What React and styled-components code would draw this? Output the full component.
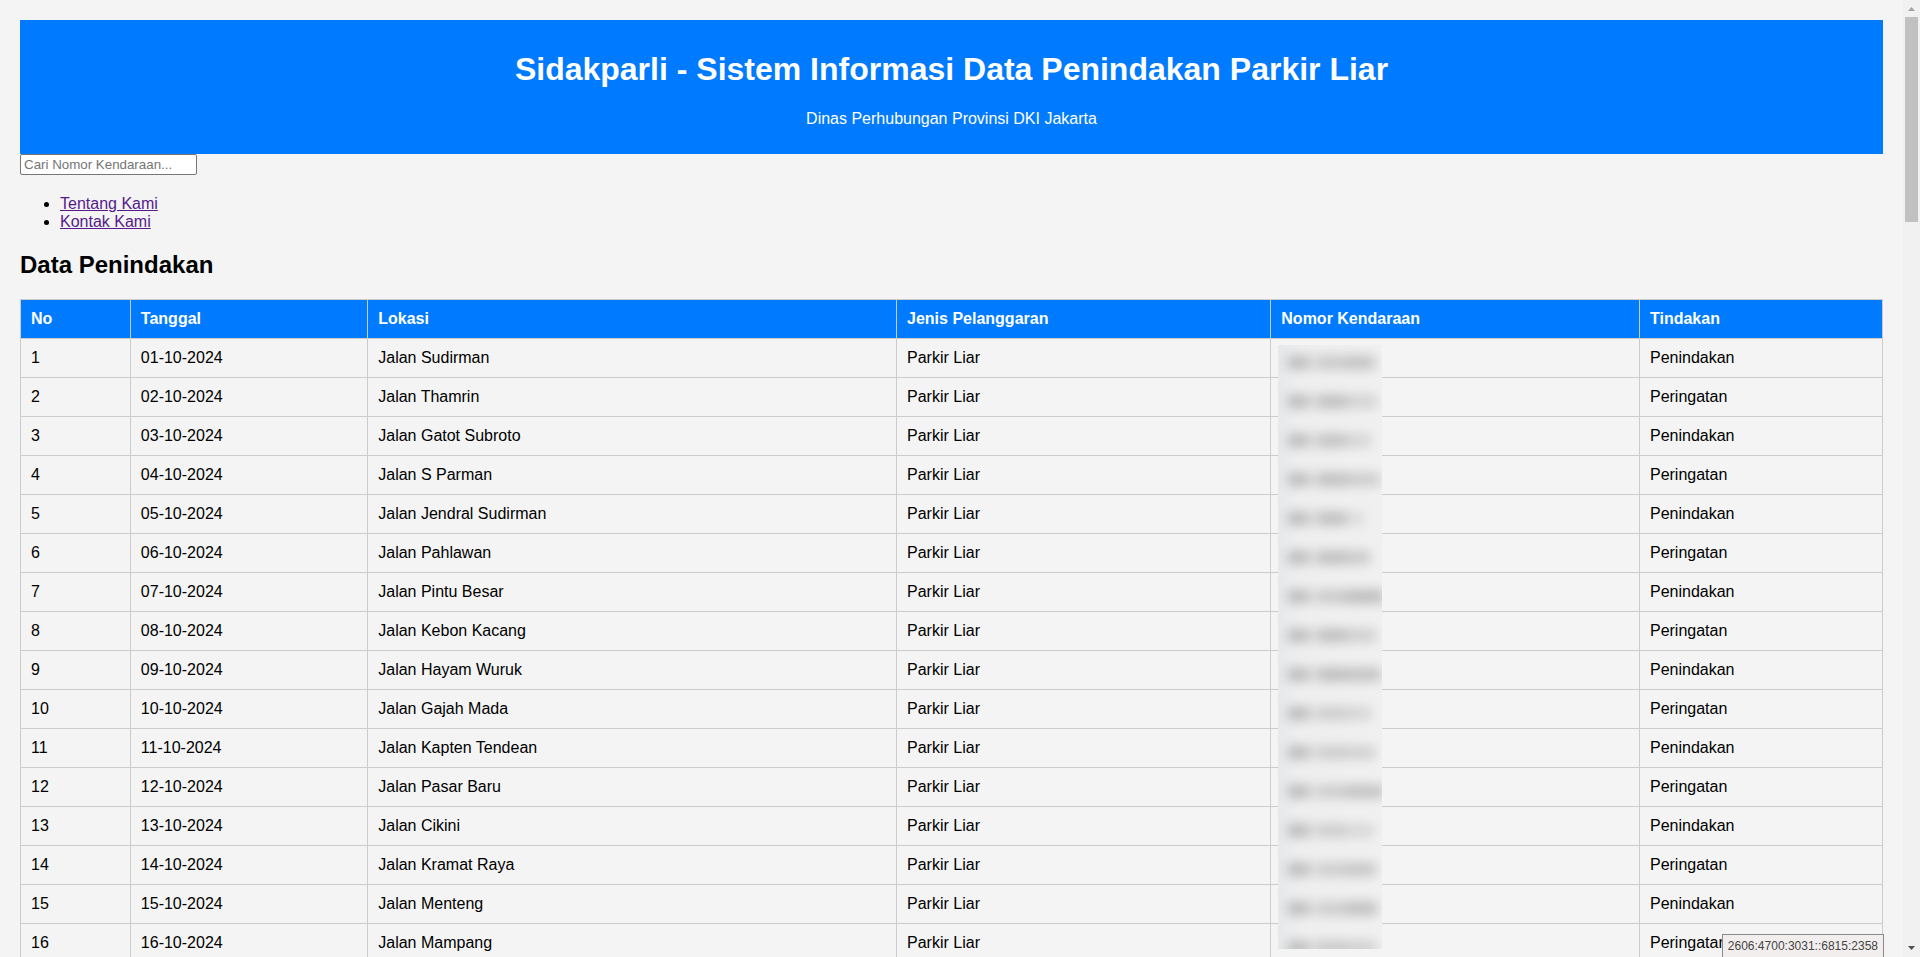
import React, { useState } from "react";
import styled, { createGlobalStyle } from "styled-components";

const GlobalStyle = createGlobalStyle`
  body {
    margin: 0;
    background-color: #f4f4f4;
    color: #000;
    font-family: Arial, "Liberation Sans", sans-serif;
    font-size: 16px;
    line-height: 18px;
  }
`;

const Layout = styled.div`
  display: flex;
  height: 100vh;
  overflow: hidden;
`;

const Page = styled.div`
  flex: 1;
  min-width: 0;
  box-sizing: border-box;
  padding: 20px;
  overflow-y: auto;
  scrollbar-width: none;
`;

const Header = styled.header`
  padding: 10px;
  background-color: #007bff;
  color: #fff;
  text-align: center;
`;

const Title = styled.h1`
  margin: 21px 0 23px;
  font-size: 32px;
  line-height: 36px;
`;

const Subtitle = styled.p`
  margin: 0 0 16px;
`;

const SearchInput = styled.input`
  display: block;
  box-sizing: border-box;
  width: 177px;
  height: 21px;
  padding: 2px 3px;
  border: 1px solid #767676;
  border-radius: 2px;
  background-color: #fff;
  font-family: inherit;
  &::placeholder {
    color: #757575;
  }
`;

const NavList = styled.ul`
  margin: 20px 0;
  padding-left: 40px;
`;

const NavLink = styled.a`
  color: #551a8b;
  text-decoration: underline;
`;

const SectionTitle = styled.h2`
  margin: 20px 0;
  font-size: 24px;
  line-height: 28px;
`;

const Table = styled.table`
  width: 100%;
  table-layout: fixed;
  border-collapse: collapse;
`;

const Column = styled.col`
  width: ${({ $width }) => $width};
`;

const HeadCell = styled.th`
  padding: 10px;
  border: 1px solid #ccc;
  background-color: #007bff;
  color: #fff;
  text-align: left;
`;

const Cell = styled.td`
  position: relative;
  height: 18px;
  padding: 10px;
  border: 1px solid #ccc;
`;

const PlateMask = styled.svg`
  position: absolute;
  top: 6px;
  left: 7px;
  width: 104px;
  height: 604px;
  z-index: 1;
`;

const AddressTip = styled.div`
  position: fixed;
  right: 36px;
  bottom: 0;
  padding: 2px 5px;
  border: 1px solid #8a8a8a;
  border-bottom: 0;
  background-color: #f2eeee;
  color: #444;
  font-size: 12px;
  z-index: 2;
`;

const ScrollTrack = styled.div`
  display: flex;
  flex-direction: column;
  align-items: center;
  width: 17px;
  background-color: #f1f1f1;
`;

const ScrollArrow = styled.svg`
  width: 17px;
  height: 17px;
  flex: none;
`;

const ScrollThumb = styled.div`
  width: 13px;
  height: 205px;
  margin-bottom: auto;
  background-color: #c1c1c1;
`;

const columns = [
  { label: "No", width: "5.9%" },
  { label: "Tanggal", width: "12.75%" },
  { label: "Lokasi", width: "28.4%" },
  { label: "Jenis Pelanggaran", width: "20.1%" },
  { label: "Nomor Kendaraan", width: "19.8%" },
  { label: "Tindakan", width: "13.05%" },
];

const streets = [
  "Jalan Sudirman",
  "Jalan Thamrin",
  "Jalan Gatot Subroto",
  "Jalan S Parman",
  "Jalan Jendral Sudirman",
  "Jalan Pahlawan",
  "Jalan Pintu Besar",
  "Jalan Kebon Kacang",
  "Jalan Hayam Wuruk",
  "Jalan Gajah Mada",
  "Jalan Kapten Tendean",
  "Jalan Pasar Baru",
  "Jalan Cikini",
  "Jalan Kramat Raya",
  "Jalan Menteng",
  "Jalan Mampang",
];

const records = streets.map((street, index) => ({
  no: index + 1,
  date: `${String(index + 1).padStart(2, "0")}-10-2024`,
  street,
  violation: "Parkir Liar",
  action: index % 2 === 0 ? "Penindakan" : "Peringatan",
}));

// one entry per plate: opacity of the digits, right edge and opacity of the suffix
const plates = [
  [0.3, 97, 0.34],
  [0.36, 99, 0.24],
  [0.34, 93, 0.22],
  [0.36, 102, 0.28],
  [0.36, 87, 0.16],
  [0.36, 92, 0.3],
  [0.29, 106, 0.38],
  [0.36, 98, 0.26],
  [0.37, 103, 0.34],
  [0.27, 93, 0.22],
  [0.27, 97, 0.25],
  [0.27, 106, 0.34],
  [0.27, 96, 0.2],
  [0.27, 98, 0.32],
  [0.27, 99, 0.36],
  [0.3, 98, 0.26],
];

const BlurredPlates = () => (
  <PlateMask viewBox="0 0 104 604" aria-hidden="true">
    <defs>
      <filter id="plateBlur" x="-20%" y="-5%" width="140%" height="110%">
        <feGaussianBlur stdDeviation="6" />
      </filter>
      <linearGradient id="plateBase">
        <stop offset="0" stopColor="#e6e8ea" />
        <stop offset="0.2" stopColor="#eeeeee" />
        <stop offset="1" stopColor="#f0f0f0" />
      </linearGradient>
    </defs>
    <rect width="104" height="604" fill="url(#plateBase)" />
    <g filter="url(#plateBlur)" opacity="0.65">
      {plates.map(([digits, end, suffix], index) => {
        const y = index * 39 + 11;
        return (
          <g key={index}>
            <rect x="10" y={y} width="20" height="13" fill="#000" opacity="0.34" />
            <rect x="30" y={y} width="10" height="13" fill="#000" opacity="0.12" />
            <rect x="40" y={y} width="28" height="13" fill="#000" opacity={digits - 0.04} />
            <rect x="68" y={y} width={end - 68} height="13" fill="#000" opacity={suffix - 0.04} />
          </g>
        );
      })}
    </g>
  </PlateMask>
);

const App = () => {
  const [search, setSearch] = useState("");

  return (
    <Layout>
      <GlobalStyle />
      <Page>
        <Header>
          <Title>Sidakparli - Sistem Informasi Data Penindakan Parkir Liar</Title>
          <Subtitle>Dinas Perhubungan Provinsi DKI Jakarta</Subtitle>
        </Header>
        <SearchInput
          type="text"
          aria-label="Cari Nomor Kendaraan"
          placeholder="Cari Nomor Kendaraan..."
          value={search}
          onChange={(e) => setSearch(e.target.value)}
        />
        <nav>
          <NavList>
            <li><NavLink href="#tentang">Tentang Kami</NavLink></li>
            <li><NavLink href="#kontak">Kontak Kami</NavLink></li>
          </NavList>
        </nav>
        <SectionTitle>Data Penindakan</SectionTitle>
        <Table>
          <colgroup>
            {columns.map((column) => (
              <Column key={column.label} $width={column.width} />
            ))}
          </colgroup>
          <thead>
            <tr>
              {columns.map((column) => (
                <HeadCell key={column.label} scope="col">{column.label}</HeadCell>
              ))}
            </tr>
          </thead>
          <tbody>
            {records.map((record, index) => (
              <tr key={record.no}>
                <Cell>{record.no}</Cell>
                <Cell>{record.date}</Cell>
                <Cell>{record.street}</Cell>
                <Cell>{record.violation}</Cell>
                <Cell>{index === 0 && <BlurredPlates />}</Cell>
                <Cell>{record.action}</Cell>
              </tr>
            ))}
          </tbody>
        </Table>
      </Page>
      <ScrollTrack aria-hidden="true">
        <ScrollArrow viewBox="0 0 17 17">
          <path d="M5 11 L8.5 7 L12 11 Z" fill="#a3a3a3" />
        </ScrollArrow>
        <ScrollThumb />
        <ScrollArrow viewBox="0 0 17 17">
          <path d="M5 6 L12 6 L8.5 10 Z" fill="#505050" />
        </ScrollArrow>
      </ScrollTrack>
      <AddressTip>2606:4700:3031::6815:2358</AddressTip>
    </Layout>
  );
};

export default App;
